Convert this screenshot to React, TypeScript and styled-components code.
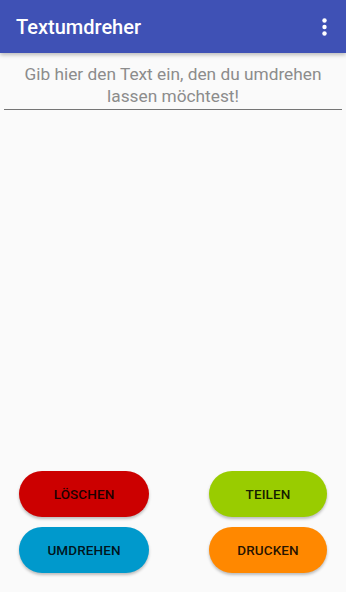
import React from "react";
import styled, { createGlobalStyle } from "styled-components";

const GlobalStyle = createGlobalStyle`
  html, body {
    margin: 0;
    padding: 0;
    background: #fafafa;
  }
  body {
    font-family: Roboto, "Noto Sans", sans-serif;
  }
`;

const Screen = styled.div`
  display: flex;
  flex-direction: column;
  height: 100vh;
  background: #fafafa;
`;

const Toolbar = styled.header`
  display: flex;
  align-items: center;
  justify-content: space-between;
  height: 53px;
  padding: 0 19px 0 16px;
  background: #3f51b5;
  box-shadow: 0 2px 4px rgba(0, 0, 0, 0.25);
  position: relative;
  z-index: 1;
`;

const Title = styled.h1`
  margin: 0;
  color: #fff;
  font-size: 20px;
  font-weight: 500;
`;

const MenuButton = styled.button`
  border: 0;
  background: none;
  padding: 0;
  display: flex;
  color: #fff;
`;

const Field = styled.textarea`
  display: block;
  margin: 10px 4px 0;
  padding: 0 0 3px;
  height: 43px;
  border: 0;
  border-bottom: 1.5px solid #757575;
  background: transparent;
  resize: none;
  font-family: Roboto, "Noto Sans", sans-serif;
  font-size: 17.3px;
  line-height: 22px;
  text-align: center;
  color: #212121;
  outline: none;
  &::placeholder {
    color: #8c8c8c;
  }
`;

const Spacer = styled.div`
  flex: 1;
`;

const Actions = styled.div`
  display: flex;
  flex-direction: column;
  gap: 10px;
  padding: 0 19px 19px;
`;

const Row = styled.div`
  display: flex;
  justify-content: space-between;
`;

const Pill = styled.button<{ $bg: string; $w: number }>`
  width: ${({ $w }) => $w}px;
  height: 46px;
  border: 0;
  border-radius: 23px;
  background: ${({ $bg }) => $bg};
  color: rgba(0, 0, 0, 0.87);
  font-family: Roboto, "Noto Sans", sans-serif;
  font-size: 13.5px;
  font-weight: 500;
  letter-spacing: 0.1px;
  box-shadow: 0 2px 3px rgba(0, 0, 0, 0.25);
`;

export default function App() {
  return (
    <>
      <GlobalStyle />
      <Screen>
        <Toolbar>
          <Title>Textumdreher</Title>
          <MenuButton aria-label="Menü">
            <svg width="5" height="18" viewBox="0 0 5 18">
              <circle cx="2.5" cy="2.5" r="2.2" fill="currentColor" />
              <circle cx="2.5" cy="9" r="2.2" fill="currentColor" />
              <circle cx="2.5" cy="15.5" r="2.2" fill="currentColor" />
            </svg>
          </MenuButton>
        </Toolbar>
        <Field placeholder="Gib hier den Text ein, den du umdrehen lassen möchtest!" />
        <Spacer />
        <Actions>
          <Row>
            <Pill $bg="#cc0000" $w={130}>LÖSCHEN</Pill>
            <Pill $bg="#99cc00" $w={118}>TEILEN</Pill>
          </Row>
          <Row>
            <Pill $bg="#0099cc" $w={130}>UMDREHEN</Pill>
            <Pill $bg="#ff8800" $w={118}>DRUCKEN</Pill>
          </Row>
        </Actions>
      </Screen>
    </>
  );
}
